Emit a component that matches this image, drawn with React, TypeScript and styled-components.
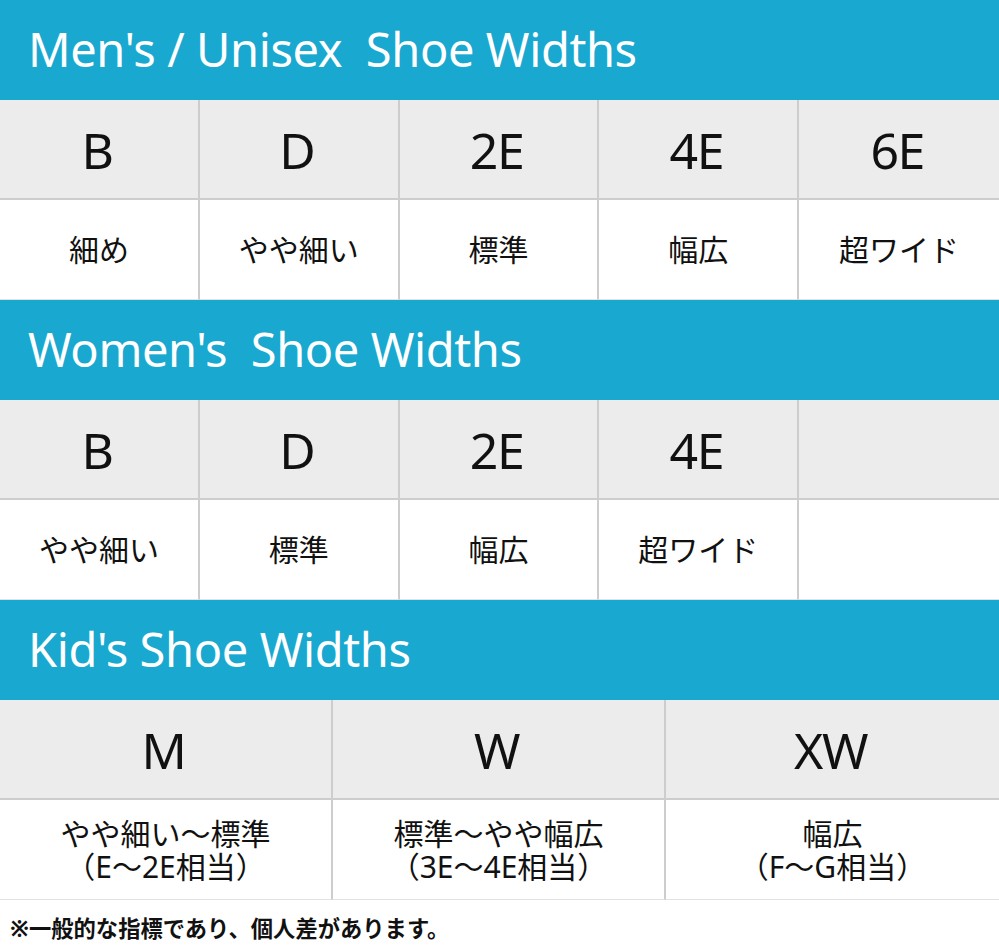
import React from 'react';
import styled, { createGlobalStyle } from 'styled-components';

const GlobalStyle = createGlobalStyle`
  html, body {
    margin: 0;
    padding: 0;
    background: #ffffff;
  }
  body {
    font-family: 'Noto Sans', 'Noto Sans CJK JP', sans-serif;
    color: #111111;
  }
`;

interface SectionData {
  title: string;
  cols: number;
  widths: string[];
  notes: string[][];
}

const sections: SectionData[] = [
  {
    title: "Men's / Unisex\u00a0\u00a0Shoe Widths",
    cols: 5,
    widths: ['B', 'D', '2E', '4E', '6E'],
    notes: [['細め'], ['やや細い'], ['標準'], ['幅広'], ['超ワイド']],
  },
  {
    title: "Women's\u00a0\u00a0Shoe Widths",
    cols: 5,
    widths: ['B', 'D', '2E', '4E', ''],
    notes: [['やや細い'], ['標準'], ['幅広'], ['超ワイド'], []],
  },
  {
    title: "Kid's Shoe Widths",
    cols: 3,
    widths: ['M', 'W', 'XW'],
    notes: [
      ['やや細い〜標準', '（E〜2E相当）'],
      ['標準〜やや幅広', '（3E〜4E相当）'],
      ['幅広', '（F〜G相当）'],
    ],
  },
];

function App() {
  return (
    <>
      <GlobalStyle />
      <Page>
        {sections.map((s) => (
          <section key={s.title}>
            <Heading>{s.title}</Heading>
            <Table $cols={s.cols}>
              {s.widths.map((w, i) => (
                <SizeCell key={'w' + i} $last={i === s.cols - 1}>
                  {w}
                </SizeCell>
              ))}
              {s.notes.map((lines, i) => (
                <NoteCell key={'n' + i} $last={i === s.cols - 1}>
                  {lines.map((l) => (
                    <NoteLine key={l}>{l}</NoteLine>
                  ))}
                </NoteCell>
              ))}
            </Table>
          </section>
        ))}
        <Footnote>※一般的な指標であり、個人差があります。</Footnote>
      </Page>
    </>
  );
}

export default App;

const Page = styled.div`
  width: 999px;
  display: flex;
  flex-direction: column;
`;

const Heading = styled.h2`
  margin: 0;
  height: 100px;
  box-sizing: border-box;
  padding-left: 28px;
  padding-bottom: 2px;
  display: flex;
  align-items: center;
  background: #19a8cf;
  color: #ffffff;
  font-family: 'Noto Sans', sans-serif;
  font-weight: 400;
  font-size: 47px;
  letter-spacing: -0.4px;
  white-space: pre;
`;

const Table = styled.div<{ $cols: number }>`
  display: grid;
  grid-template-columns: repeat(${(p) => p.$cols}, 1fr);
  grid-template-rows: 100px 100px;
`;

const SizeCell = styled.div<{ $last: boolean }>`
  box-sizing: border-box;
  background: #ececec;
  border-bottom: 2px solid #cdcdcd;
  border-right: ${(p) => (p.$last ? 'none' : '2px solid #cdcdcd')};
  display: flex;
  align-items: center;
  justify-content: center;
  padding-top: 2px;
  padding-right: 4px;
  font-family: 'Noto Sans', sans-serif;
  font-size: 50px;
  letter-spacing: -1.5px;
  color: #111111;
`;

const NoteCell = styled.div<{ $last: boolean }>`
  box-sizing: border-box;
  background: #ffffff;
  border-right: ${(p) => (p.$last ? 'none' : '2px solid #cdcdcd')};
  border-bottom: 1px solid #e2e2e2;
  display: flex;
  flex-direction: column;
  align-items: center;
  justify-content: center;
  font-size: 30px;
  line-height: 33px;
  color: #111111;
`;

const NoteLine = styled.span`
  display: block;
  white-space: nowrap;
`;

const Footnote = styled.p`
  margin: 0;
  height: 50px;
  box-sizing: border-box;
  padding-left: 10px;
  padding-top: 4px;
  display: flex;
  align-items: center;
  font-size: 22.3px;
  font-weight: 700;
  color: #111111;
`;
